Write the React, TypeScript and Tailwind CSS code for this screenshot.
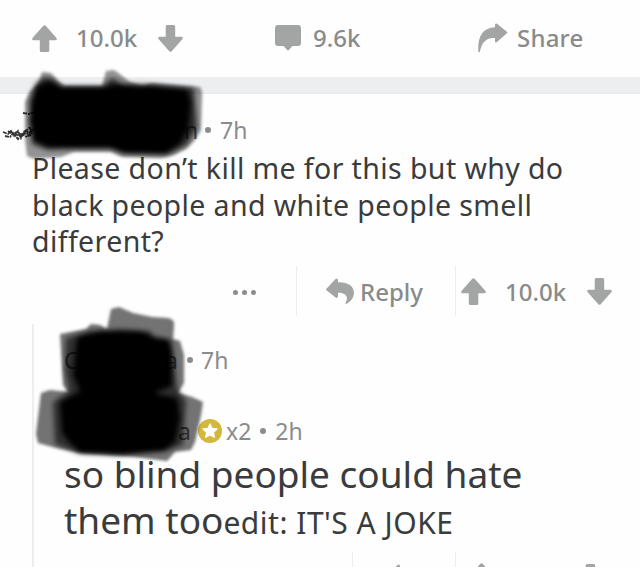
import type { ReactNode } from 'react';

function UpArrow({ className = '' }: { className?: string }) {
  return (
    <svg className={`h-[27px] w-[25px] shrink-0 fill-[#a3a5a5] ${className}`} viewBox="0 0 25 27">
      <path d="M11.3 .8Q12.5-.4 13.7.8L24.3 12.7Q25.7 15.2 23.3 15.2H17.3V25.5Q17.3 27 15.8 27H9.3Q7.8 27 7.8 25.5V15.2H1.7Q-.7 15.2 .7 12.7Z" />
    </svg>
  );
}

function DownArrow({ className = '' }: { className?: string }) {
  return <UpArrow className={`rotate-180 ${className}`} />;
}

function CommentIcon() {
  return (
    <svg className="h-[26px] w-[26px] shrink-0 fill-[#a3a5a5]" viewBox="0 0 26 26">
      <path d="M3 0H23Q26 0 26 3V18Q26 21 23 21H17.5L13.8 25Q13 25.6 12.2 25L8.5 21H3Q0 21 0 18V3Q0 0 3 0Z" />
    </svg>
  );
}

function ShareIcon() {
  return (
    <svg className="h-[30px] w-[30px] shrink-0 fill-[#a3a5a5]" viewBox="0 0 30 30">
      <path d="M17 4.2V1.6Q17.4 .2 19 .8L28.6 8.5Q30 9.5 28.6 10.6L19 19Q17.2 20 17 18.4V15C8.5 14.4 3.8 19 2 28.5Q1 30.2 .4 28.5C-.8 15 4 4.5 17 4.2Z" />
    </svg>
  );
}

function ReplyIcon({ className = '' }: { className?: string }) {
  return (
    <svg className={`h-[27px] w-[28px] shrink-0 fill-[#a3a5a5] ${className}`} viewBox="0 0 28 27">
      <path d="M.7 10.4L9.5 1Q11.6-.4 12 2V4.3C22 4 27.8 8.2 27.9 14.5C28 19.5 25 23.5 20.8 25.7Q19 26.3 19.6 24.6C23 18.7 19.5 14.5 12 14.7V18.6Q11.4 20.7 9.6 19.4L.7 12.6Q-.6 11.5 .7 10.4Z" />
    </svg>
  );
}

function GoldStar() {
  return (
    <svg className="h-6 w-6 shrink-0" viewBox="0 0 24 24">
      <circle cx="12" cy="12" r="12" fill="#d5b83b" />
      <path
        d="M12 5L14.1 9.5 19 10 15.4 13.4 16.4 18.3 12 15.9 7.6 18.3 8.6 13.4 5 10 9.9 9.5Z"
        fill="white"
        stroke="white"
        strokeWidth="1.3"
        strokeLinejoin="round"
      />
    </svg>
  );
}

function Dot({ size = 'size-[6px]', className = '' }: { size?: string; className?: string }) {
  return <span className={`${size} shrink-0 rounded-full bg-[#8b8c8d] ${className}`} />;
}

function Meta({ children, className = '' }: { children: ReactNode; className?: string }) {
  return (
    <div className={`flex h-[30px] items-center text-[23px] leading-[30px] text-[#8a8b8c] ${className}`}>
      {children}
    </div>
  );
}

function TopScribble() {
  return (
    <svg className="pointer-events-none absolute top-0 left-0 h-[170px] w-[220px]" viewBox="0 0 220 170">
      <defs>
        <filter id="soft" x="-10%" y="-10%" width="120%" height="120%">
          <feGaussianBlur stdDeviation="1.7" />
        </filter>
        <filter id="softer" x="-10%" y="-10%" width="120%" height="120%">
          <feGaussianBlur stdDeviation="2.8" />
        </filter>
      </defs>
      <g filter="url(#soft)">
        <path fillOpacity=".42" d="M38 84L42 72 51 73 58 81 65 86H102L106 71 114 70 121 75 130 82 143 86 152 83 200 87Q203 91 202 99L201 130 196 139 186 149 174 155 162 158 122 157 111 152H74L61 157 34 159 27 156 25 140 25 102 30 91Z" />
      </g>
      <g filter="url(#softer)">
        <path fillOpacity=".7" d="M36 83L45 77 53 79 62 86H103L112 78 122 84 148 84 194 88 197 128 187 145 168 155 124 154 110 149 74 149 48 150 32 144 29 101Z" />
        <path d="M36 87L49 81 62 87 104 87 120 84 139 87 150 86 187 89 191 103 188 130 179 145 164 154 124 153 111 148 72 148 47 147 33 140 29 121 32 104Z" />
      </g>
      <path
        d="M3 132L8 134 11 131 14 136 18 131 21 138 25 130 29 133 34 129M5 136L10 137 13 133 18 139 22 134 27 137 32 132M8 131L12 134 17 132 22 135 26 131M23 113L29 114 35 112M25 132L30 127 32 135M15 134L20 136 26 133 31 136"
        fill="none"
        stroke="black"
        strokeOpacity=".8"
        strokeWidth="1.8"
        strokeDasharray="4 1 2 .7"
      />
    </svg>
  );
}

function ReplyScribble() {
  return (
    <svg className="pointer-events-none absolute top-[295px] left-[20px] h-[170px] w-[220px]" viewBox="0 0 220 170">
      <g filter="url(#soft)">
        <path fillOpacity=".55" d="M91 14L99 12 113 18 132 22 148 23Q155 24 154 31L153 44 160 46 164 60 164 88 158 98 172 102 183 107 181 120 175 147 171 155 155 157 147 166 107 161 60 158 36 153 18 148 16 139 21 98 30 95 48 97 43 90 40 39 66 34 71 29 80 30 87 34Z" />
      </g>
      <g filter="url(#softer)">
        <path fillOpacity=".6" d="M46 43L69 36 101 34 130 36 134 43 152 45 157 93 166 106 163 150 147 156 103 160 58 158 35 149 33 107 49 96 45 75Z" />
        <path d="M57 42L80 36 120 36 135 42 148 44 152 57 152 91 134 98 157 103 160 123 155 147 144 156 101 160 60 158 50 148 42 138 40 107 60 96 53 80Z" />
      </g>
    </svg>
  );
}

export default function App() {
  return (
    <div className="relative h-[567px] w-[640px] overflow-hidden bg-[#fefefe] font-['Noto_Sans','Open_Sans',sans-serif] text-[#3a3b3c]">
      <header className="flex h-[76px] items-center text-[24px] leading-[30px] font-medium text-[#898b8b]">
        <UpArrow className="ml-[32px]" />
        <span className="ml-[19px] w-[82px] whitespace-nowrap">10.0k</span>
        <DownArrow />
        <span className="ml-[92px]"><CommentIcon /></span>
        <span className="ml-3 w-[165px]">9.6k</span>
        <ShareIcon />
        <span className="ml-[9px] tracking-[0.2px]">Share</span>
      </header>
      <div className="mt-px h-[17px] border-b border-[#e8eaec] bg-[#edeef0]" />

      <article className="h-[172px] pt-[21px]">
        <Meta className="pl-[184px]">
          <span className="w-[21px] text-[#666]">n</span>
          <Dot />
          <span className="ml-[9px]">7h</span>
        </Meta>
        <p className="mt-[5px] pl-[32px] text-[28.5px] leading-[36.5px] tracking-[0.4px] whitespace-nowrap">
          <span className="block">Please don’t kill me for this but why do</span>
          <span className="block">black people and white people smell</span>
          <span className="block">different?</span>
        </p>
      </article>

      <div className="flex h-[50px] items-center text-[24px] leading-[30px] font-medium text-[#898b8b]">
        <div className="flex w-[296px] gap-[4px] pt-[2px] pl-[233px]">
          <Dot size="size-[5px]" />
          <Dot size="size-[5px]" />
          <Dot size="size-[5px]" />
        </div>
        <div className="flex h-full w-[159px] items-center border-l border-[#ededee] pt-px pl-[29px]">
          <ReplyIcon />
          <span className="ml-[6px]">Reply</span>
        </div>
        <div className="flex h-full items-center border-l border-[#ededee] pt-px pl-[5px]">
          <UpArrow />
          <span className="ml-[19px] w-[82px]">10.0k</span>
          <DownArrow />
        </div>
      </div>

      <section className="mt-2 ml-[32px] h-[243px] border-l-2 border-[#eeeeef] pt-[21px]">
        <Meta className="pl-[30px]">
          <span className="w-[101px] text-[#666]">C</span>
          <span className="w-[22px] text-[#666]">a</span>
          <Dot />
          <span className="ml-[8px]">7h</span>
        </Meta>
        <Meta className="mt-[41px] pl-[144px]">
          <span className="w-[20px] text-[#666]">a</span>
          <GoldStar />
          <span className="ml-[4px]">x2</span>
          <Dot className="ml-[9px]" />
          <span className="ml-[9px]">2h</span>
        </Meta>
        <p className="mt-[5px] pl-[30px] text-[37px] leading-[46px] whitespace-nowrap">
          <span className="block">so blind people could hate</span>
          <span className="block h-[46px]">them too<span className="text-[30px] leading-none tracking-[0.5px]">edit: IT'S A JOKE</span></span>
        </p>
        <div className="mt-[9px] ml-[318px] flex h-[50px] border-l border-[#ededee]">
          <div className="w-[102px] pl-[35px]"><ReplyIcon className="mt-[12px]" /></div>
          <div className="flex border-l border-[#ededee] pl-[13px]">
            <UpArrow className="mt-[11px]" />
            <DownArrow className="mt-[12px] ml-[84px]" />
          </div>
        </div>
      </section>

      <TopScribble />
      <ReplyScribble />
    </div>
  );
}
